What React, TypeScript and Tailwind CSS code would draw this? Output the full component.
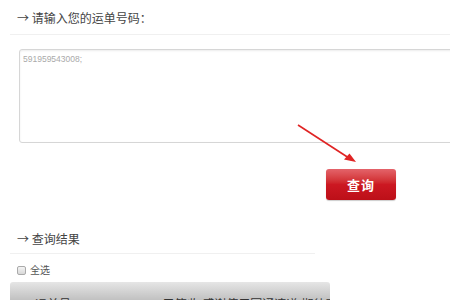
export default function App() {
  const cjk = { fontFamily: '"Noto Sans CJK SC", "Liberation Sans", sans-serif' };
  return (
    <div className="relative w-[450px] h-[300px] overflow-hidden bg-white" style={cjk}>
      <div className="pl-[10px]">
        {/* heading */}
        <div className="pt-[10px] pb-[8px] pl-[7px] border-b border-[#f0f0f0] text-[12px] leading-[16px] text-[#444]">
          → 请输入您的运单号码：
        </div>

        {/* textarea */}
        <div className="mt-[14px] ml-[9px] w-[460px] h-[94px] rounded-[3px] border border-[#d6d6d6] shadow-[inset_0_1px_2px_rgba(0,0,0,0.08)] px-[3px] pt-[3px]">
          <div className="text-[8.5px] leading-[12px] text-[#aaa]" style={{ fontFamily: '"Liberation Sans", sans-serif' }}>
            591959543008;
          </div>
        </div>

        {/* button */}
        <div className="mt-[26px] pl-[316px]">
          <button className="w-[70px] h-[31px] rounded-[3px] bg-gradient-to-b from-[#e4636a] via-[#cc1822] to-[#bc0f18] text-white text-[13px] font-bold tracking-[1px] shadow-[0_1px_1px_rgba(0,0,0,0.2)]">
            查询
          </button>
        </div>

        {/* results heading */}
        <div className="mt-[31px] w-[305px] pb-[6px] pl-[7px] border-b border-[#f0f0f0] text-[12px] leading-[16px] text-[#444]">
          → 查询结果
        </div>

        {/* select all */}
        <div className="mt-[10px] pl-[7px] flex items-center gap-[4px] text-[10px] leading-[12px] text-[#555]">
          <span className="w-[9px] h-[9px] border border-[#aaa] rounded-[2px] bg-gradient-to-b from-[#f4f4f4] to-[#d8d8d8]" />
          <span>全选</span>
        </div>

        {/* result bar */}
        <div className="mt-[6px] w-[320px] h-[30px] rounded-t-[3px] bg-gradient-to-b from-[#e6e6e6] to-[#a9a9a9] pl-[25px] pt-[14px] text-[12px] leading-[16px] text-[#333] whitespace-nowrap overflow-hidden">
          运单号：591959543008已签收,感谢使用圆通速递,期待再次为您服务
        </div>
      </div>

      {/* red arrow */}
      <svg className="absolute left-0 top-0" width="450" height="300" viewBox="0 0 450 300">
        <line x1="298" y1="125" x2="352" y2="160" stroke="#e02424" strokeWidth="1.6" />
        <path d="M356 162 L344 159.5 L349.5 153.5 Z" fill="#e02424" />
      </svg>
    </div>
  );
}
